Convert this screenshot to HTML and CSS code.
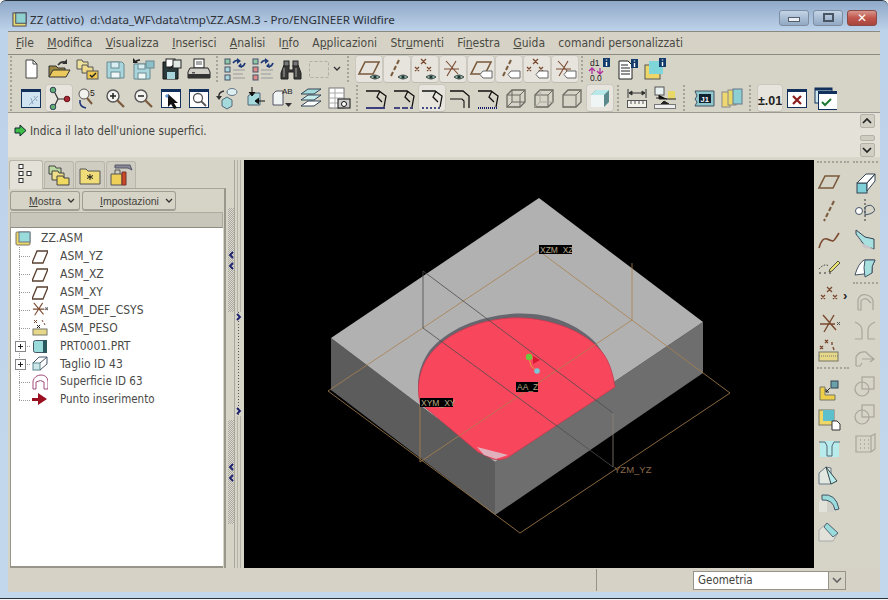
FILE: index.html
```html
<!DOCTYPE html>
<html lang="it">
<head>
<meta charset="utf-8">
<title>ZZ (attivo) - Pro/ENGINEER Wildfire</title>
<link rel="stylesheet" href="styles.css">
</head>
<body>
<svg class="defs" xmlns="http://www.w3.org/2000/svg"><defs>
<g id="p-eye"><path d="M13 20q5-4 10 0q-5 4-10 0z" fill="#8fb0a4" stroke="#3c4a48"/><circle cx="18" cy="20" r="1.600" fill="#1e3330"/></g>
<g id="p-tag"><path d="M14 14h9v7h-9l-3-3.500z" fill="#fff" stroke="#666"/></g>
<g id="p-plane"><path d="M8 5h14l-6 12H2z" fill="none" stroke="#7a5a3c" stroke-width="1.600"/></g>
<g id="p-axis"><path d="M14 3l-2 4M11 9l-2 4M8 15l-2 4" fill="none" stroke="#7a5a3c" stroke-width="2"/></g>
<g id="p-pts" fill="none" stroke="#7a4a30" stroke-width="1.300"><path d="M8 2l5 5M13 2l-5 5M2 10l4 4M6 10l-4 4M14 10l4 4M18 10l-4 4"/></g>
<g id="p-csys" fill="none" stroke="#7a4a30" stroke-width="1.100"><path d="M5 4l12 13M15 4L6 19M3 12h15"/></g>
<g id="p-i"><rect x="17" y="1" width="7" height="9" fill="#123a6a"/><path d="M20.500 2.500v1M20.500 5v4" stroke="#fff" stroke-width="1.400"/></g>
<g id="p-win"><rect x="2.500" y="3.500" width="19" height="18" fill="#fff" stroke="#12305c"/><rect x="2" y="3" width="20" height="3" fill="#12305c"/></g>
<g id="p-mag"><circle cx="10" cy="10" r="6" fill="#f2f2ee" stroke="#555" stroke-width="1.400"/><path d="M14 14l7 7" stroke="#7a5a3c" stroke-width="2.200"/></g>
<g id="p-floppy"><path d="M4 5h15l2 2v14H4z" fill="#a8d6dc" stroke="#6a8a90"/><rect x="8" y="5" width="8" height="6" fill="#d8eef0" stroke="#6a8a90"/><rect x="8" y="15" width="9" height="6" fill="#eef6f6" stroke="#6a8a90"/></g>

<g id="new"><path d="M7 3h7l4 4v14H7z" fill="#fff" stroke="#444"/><path d="M14 3v4h4" fill="none" stroke="#444"/></g>
<g id="open"><path d="M2 20V9h7l2 2h7v2" fill="#9a8640" stroke="#333"/><path d="M2 20l4-7h17l-4 7z" fill="#ecc95c" stroke="#333"/><path d="M11 8q4-5 8-2" fill="none" stroke="#333" stroke-width="1.600"/><path d="M20 2v5h-5z" fill="#333"/></g>
<g id="multi"><path d="M2 3h5l1 2h5v7H2z" fill="#efe29a" stroke="#555"/><path d="M7 8h5l1 2h5v6H7z" fill="#efd98a" stroke="#555"/><rect x="12" y="14" width="11" height="8" fill="#edc64e" stroke="#555"/><path d="M15 18l2 2 4-4" fill="none" stroke="#222" stroke-width="1.400"/></g>
<g id="save"><use href="#p-floppy"/></g>
<g id="saveas"><path d="M3 7h14l2 2v13H3z" fill="#a8d6dc" stroke="#6a8a90"/><rect x="7" y="7" width="7" height="5" fill="#d8eef0" stroke="#6a8a90"/><rect x="7" y="16" width="8" height="6" fill="#eef6f6" stroke="#6a8a90"/><path d="M4 6q1-3 5-3" fill="none" stroke="#222" stroke-width="1.400"/><path d="M2 1v5h5z" fill="#222"/><rect x="15" y="4" width="8" height="7" fill="#8cc0c8" stroke="#6a8a90"/></g>
<g id="backup"><path d="M4 5h15v17H4z" fill="#2b3b3c" stroke="#111"/><rect x="7" y="2" width="9" height="8" fill="#fff" stroke="#222"/><path d="M8 15h8v7H8z" fill="#a8d6dc"/><path d="M10 12l6-5" stroke="#222" stroke-width="1.500"/><rect x="14" y="3" width="8" height="8" fill="#dfe8e4" stroke="#222"/></g>
<g id="print"><rect x="7" y="2" width="10" height="9" fill="#fff" stroke="#222"/><path d="M9 5h6M9 7h6" stroke="#555"/><path d="M3 11h18l2 4v6H1v-6z" fill="#d0cfc8" stroke="#222"/><rect x="1" y="17" width="22" height="4" fill="#333"/><rect x="5" y="15" width="3" height="1.500" fill="#555"/></g>
<g id="regen"><rect x="2" y="2" width="5" height="5" fill="#8fc8a8" stroke="#456"/><rect x="2" y="10" width="5" height="5" fill="#a8d6dc" stroke="#456"/><rect x="2" y="18" width="5" height="5" fill="#a8d6dc" stroke="#456"/><path d="M10 6q3-4 6-2M22 6q-2 5-6 3" fill="none" stroke="#1e3a78" stroke-width="1.800"/><path d="M14 1v6l4-3zM18 6l-3 3 4 2z" fill="#1e3a78"/><path d="M10 13h12M10 17h10M10 21h12" stroke="#999"/></g>
<g id="regen2"><rect x="2" y="2" width="5" height="5" fill="#8fc8a8" stroke="#456"/><rect x="2" y="10" width="5" height="5" fill="#e08888" stroke="#456"/><rect x="2" y="18" width="5" height="5" fill="#e08888" stroke="#456"/><path d="M10 6q3-4 6-2M22 6q-2 5-6 3" fill="none" stroke="#1e3a78" stroke-width="1.800"/><path d="M14 1v6l4-3zM18 6l-3 3 4 2z" fill="#1e3a78"/><path d="M10 13h12M10 17h10M10 21h12" stroke="#999"/></g>
<g id="binoc"><path d="M5 8h5v5h4V8h5l3 8v6h-7v-7h-6v7H2v-6z" fill="#3a3a38" stroke="#222"/><rect x="5" y="4" width="5" height="5" fill="#777" stroke="#222"/><rect x="14" y="4" width="5" height="5" fill="#777" stroke="#222"/><path d="M5 11v9M17 11v9" stroke="#aaa"/></g>
<g id="dash"><rect x="2.500" y="4.500" width="19" height="16" fill="none" stroke="#b0aea4" stroke-dasharray="3 2"/></g>
<g id="pl-eye"><use href="#p-plane"/><use href="#p-eye"/></g>
<g id="ax-eye"><use href="#p-axis"/><use href="#p-eye"/></g>
<g id="pt-eye"><use href="#p-pts"/><use href="#p-eye"/></g>
<g id="cs-eye"><use href="#p-csys"/><use href="#p-eye"/></g>
<g id="pl-tag"><use href="#p-plane"/><use href="#p-tag"/></g>
<g id="ax-tag"><use href="#p-axis"/><use href="#p-tag"/></g>
<g id="pt-tag"><use href="#p-pts"/><use href="#p-tag"/></g>
<g id="cs-tag"><use href="#p-csys"/><use href="#p-tag"/></g>
<g id="dim-i"><text x="4" y="9" class="svgtxt">d1</text><path d="M6 11v6M3 14l3-3 3 3" fill="none" stroke="#b030a0" stroke-width="1.300"/><path d="M14 11v6M11 14l3 3 3-3" fill="none" stroke="#b030a0" stroke-width="1.300"/><text x="4" y="23.500" class="svgtxt">0.0</text><use href="#p-i"/></g>
<g id="list-i"><path d="M5 4h9l4 4v14H5z" fill="#fff" stroke="#222"/><path d="M7 8h7M7 11h9M7 14h9M7 17h9" stroke="#222"/><use href="#p-i" transform="translate(0 1)"/></g>
<g id="box-i"><rect x="3" y="8" width="15" height="14" fill="#efd668" stroke="#555"/><rect x="7" y="4" width="14" height="13" fill="#7fd6d8"/><use href="#p-i"/></g>

<g id="paint"><use href="#p-win"/><rect x="3" y="6" width="18" height="15" fill="#cfe4f0"/><path d="M10 19l9-9M12 12l2 6M15 10l3 5" stroke="#8fa8c0"/></g>
<g id="tree"><path d="M7 5l4 8-4 8M11 13h9" fill="none" stroke="#333" stroke-width="1.200"/><circle cx="6" cy="4" r="2.800" fill="#5fae78" stroke="#345"/><circle cx="6" cy="21" r="2.800" fill="#5fae78" stroke="#345"/><circle cx="20" cy="13" r="2.800" fill="#a8283a" stroke="#611"/></g>
<g id="zoomfit"><circle cx="9" cy="8" r="5" fill="#f2f2ee" stroke="#555"/><path d="M12 12l5 6" stroke="#7a5a3c" stroke-width="2"/><path d="M5 14q-1 7 6 8" fill="none" stroke="#1e3a78" stroke-width="1.600"/><text x="15" y="10" class="svgtxt">5</text></g>
<g id="zoomin"><use href="#p-mag"/><path d="M7 10h6M10 7v6" stroke="#222" stroke-width="1.500"/></g>
<g id="zoomout"><use href="#p-mag"/><path d="M7 10h6" stroke="#222" stroke-width="1.500"/></g>
<g id="wincur"><use href="#p-win"/><path d="M9 8v13l3-3 3 5 3-1-3-5h4z" fill="#111"/><path d="M6 10h4M8 8v4" stroke="#3a78c0"/></g>
<g id="winmag"><use href="#p-win"/><circle cx="11" cy="12" r="4.500" fill="none" stroke="#555" stroke-width="1.300"/><path d="M14 15l5 5" stroke="#555" stroke-width="1.800"/></g>
<g id="spin"><path d="M7 14l5-3 5 3v6l-5 3-5-3z" fill="#a4dadc" stroke="#567"/><ellipse cx="17" cy="6" rx="5" ry="3.500" fill="#dceef0" stroke="#678"/><path d="M9 5Q3 6 4 12" fill="none" stroke="#333" stroke-width="1.500"/><path d="M1 10h6l-3 4z" fill="#333"/></g>
<g id="orient"><path d="M5 10l4-3h8v12H5z" fill="#a4dadc" stroke="#567"/><path d="M9 1v8M6 6l3 4 3-4" fill="#111" stroke="#111"/><path d="M22 15h-9M16 12l-4 3 4 3" fill="#111" stroke="#111"/></g>
<g id="ab"><path d="M2 8l3-3h7v14H2z" fill="#f0f4f2" stroke="#556"/><text x="11" y="8" class="svgtxt svgwide">AB</text><path d="M14 17h7l-3.500 4z" fill="#333"/></g>
<g id="layers"><path d="M9 3h13l-7 5H2z" fill="#a4dadc" stroke="#345"/><path d="M9 9h13l-7 5H2z" fill="#c8ecec" stroke="#345"/><path d="M9 15h13l-7 5H2z" fill="#fff" stroke="#345"/></g>
<g id="camtab"><rect x="2" y="2" width="15" height="20" fill="#fff" stroke="#777"/><path d="M2 7h15M2 12h15M2 17h15M8 2v20" stroke="#aaa"/><rect x="11" y="13" width="12" height="9" fill="#ccc" stroke="#111"/><circle cx="17" cy="18" r="2.500" fill="#fff" stroke="#111"/></g>
<g id="e-b" fill="none" stroke="#111" stroke-width="1.300"><path d="M2 5h13l7 5-2 11"/><path d="M16 5l-3 6 5 5"/></g>
<g id="e1"><use href="#e-b"/><path d="M2 22h19" stroke="#151a6a" stroke-width="1.600"/></g>
<g id="e2"><use href="#e-b"/><path d="M2 22h19" stroke="#151a6a" stroke-width="1.600" stroke-dasharray="6 2"/></g>
<g id="e3"><use href="#e-b"/><path d="M2 22h19" stroke="#151a6a" stroke-width="1.600" stroke-dasharray="2 2"/></g>
<g id="e4"><path d="M2 5h13l6 5v12" fill="none" stroke="#111" stroke-width="1.300"/><path d="M2 13h12l2 2v7" fill="none" stroke="#111" stroke-width="1.100"/></g>
<g id="e5"><use href="#e-b"/><path d="M2 22h19" stroke="#151a6a" stroke-width="2" stroke-dasharray="1 1"/></g>
<g id="c-out" fill="none" stroke="#6a6a62" stroke-width="1.300"><path d="M3 9l5-5h13v12l-5 5H3z"/></g>
<g id="c1"><use href="#c-out"/><path d="M3 9h13v12M16 9l5-5M3 21l5-5h13M8 4v12" fill="none" stroke="#6a6a62"/></g>
<g id="c2"><use href="#c-out"/><path d="M3 9h13v12M16 9l5-5" fill="none" stroke="#6a6a62"/><path d="M3 21l5-5h13M8 4v12" fill="none" stroke="#aaa89e"/></g>
<g id="c3"><use href="#c-out"/><path d="M3 9h13v12M16 9l5-5" fill="none" stroke="#6a6a62"/></g>
<g id="c4"><path d="M3 9l5-5h13v12l-5 5z" fill="#5c8a8c"/><rect x="3" y="9" width="13" height="12" fill="#eff4f4"/><path d="M3 9l5-5h13l-5 5z" fill="#b8e8ea"/></g>
<g id="ruler"><path d="M3 3v9M21 3v9M4 7h16M4 7l3-2v4zM20 7l-3-2v4z" fill="#333" stroke="#333"/><rect x="2.500" y="14.500" width="19" height="7" fill="#f2f2ea" stroke="#555"/><path d="M6 15v3M10 15v3M14 15v3M18 15v3" stroke="#555"/></g>
<g id="scale"><rect x="2" y="1" width="9" height="8" fill="#e8f0f0" stroke="#555"/><path d="M6 9v4h8M3 12h6" stroke="#222"/><rect x="15" y="5" width="7" height="8" fill="#e8d868"/><path d="M13 13h10M11 15l-3 3h8z" fill="#222" stroke="#222"/><rect x="1.500" y="18.500" width="21" height="4" fill="#eee" stroke="#777"/></g>
<g id="j1"><path d="M3 5h19v15H3l2-4-2-3 2-3z" fill="#8ec8cc" stroke="#456"/><rect x="7" y="8" width="12" height="9" fill="#123"/><text x="8.500" y="15.500" class="svgtxt svgwhite">J1</text></g>
<g id="books"><rect x="2" y="6" width="8" height="15" fill="#f0d870" stroke="#888"/><rect x="8" y="4" width="8" height="15" fill="#e8d868" stroke="#888"/><rect x="13" y="3" width="9" height="15" fill="#8cd0d4" stroke="#678"/></g>
<g id="tol"><text x="0" y="19" class="svgtol">±.01</text></g>
<g id="winx"><use href="#p-win"/><path d="M8 10l8 8M16 10l-8 8" stroke="#8a1c1c" stroke-width="2.200"/></g>
<g id="wincheck"><rect x="2" y="2" width="17" height="15" fill="#cfe8ee" stroke="#12305c"/><rect x="2" y="2" width="17" height="2.500" fill="#12305c"/><use href="#p-win" transform="translate(3 2)"/><path d="M9 16l3 3 6-6" fill="none" stroke="#1e7a30" stroke-width="2"/></g>

<g id="plane"><use href="#p-plane"/></g>
<g id="axis"><path d="M17 2l-2 4M14 8l-2 4M11 14l-2 4M8 20l-1 2" stroke="#7a5a3c" stroke-width="2"/></g>
<g id="curve"><path d="M2 21q3-11 8-9t6 2 6-8" fill="none" stroke="#7a4a30" stroke-width="1.600"/></g>
<g id="skcurve"><path d="M2 14q5-6 10-3" fill="none" stroke="#333" stroke-dasharray="1.500 1.500"/><path d="M2 18h2M7 18h2M12 18h2" stroke="#333"/><path d="M13 14l8-8 2 2-8 8-3 1z" fill="#e8e070" stroke="#554"/></g>
<g id="pts"><use href="#p-pts" transform="translate(2 2)"/></g>
<g id="csys"><path d="M6 4l13 15M17 4L7 21M3 13h15" fill="none" stroke="#7a4a30" stroke-width="1.400"/><path d="M20 11l3 3M23 11l-3 3" stroke="#555"/></g>
<g id="weight"><path d="M8 1l3 3M11 1L8 4M3 7l3 3M6 7l-3 3M15 3v3M16 8l1 3" stroke="#7a4a30" stroke-width="1.400"/><rect x="2" y="13" width="19" height="9" fill="#e6d888" stroke="#776"/><path d="M2 17h19" stroke="#776" stroke-dasharray="1 1"/></g>
<g id="import"><path d="M3 8h5v8h10v5H3z" fill="#efcf48" stroke="#776"/><path d="M9 13l4-4M9 10v3h3" fill="none" stroke="#222"/><rect x="14" y="2" width="7" height="7" fill="#6aa0a8" stroke="#345"/></g>
<g id="tagbox"><rect x="2" y="3" width="15" height="15" fill="#efd668" stroke="#776"/><rect x="6" y="3" width="11" height="11" fill="#5cc0cc"/><path d="M15 14h5l3 3v6h-8z" fill="#fff" stroke="#333"/></g>
<g id="trim"><rect x="3" y="6" width="19" height="16" fill="#b8ecec"/><path d="M2 7h6l2 4v10M23 7h-6l-2 4v10M10 21h5" fill="none" stroke="#567"/></g>
<g id="chamfer"><path d="M2 10l7-6 5 1v16H2z" fill="#e2e8e0" stroke="#678"/><path d="M9 4l11 14-6 3-5-17z" fill="#b8ecec" stroke="#344"/></g>
<g id="round"><path d="M2 12q0-6 8-7v16H2z" fill="#e2e2da"/><path d="M10 5q10 0 11 13l-4 3H10z" fill="#d0d0c8"/><path d="M5 4q14-2 17 14l-4 1Q16 8 5 9z" fill="#9adcdc" stroke="#456"/></g>
<g id="bevel"><path d="M2 11l8-7 11 10-5 8H2z" fill="#e2e2da" stroke="#aaa"/><path d="M10 4l11 10-5 4L7 8z" fill="#9adcdc" stroke="#567"/></g>
<g id="extrude"><rect x="4" y="12" width="10" height="10" fill="#7fd0d8" stroke="#345"/><path d="M4 12l9-9h9l-8 9zM22 3v7l-8 10v-8z" fill="#fff" stroke="#345"/></g>
<g id="revolve"><path d="M12 0v24" stroke="#333" stroke-dasharray="2 2"/><circle cx="6" cy="12" r="3.500" fill="#fff" stroke="#456"/><path d="M12 8q6-4 9 1t-9 7z" fill="none" stroke="#456"/></g>
<g id="sweep"><path d="M3 3l9 7 9 2v10l-9-3-9-12z" fill="#a8e0e0" stroke="#345"/><path d="M3 7l6 9 12 6-10-1z" fill="#c8c4c8"/></g>
<g id="blend"><path d="M2 20q3-11 9-15h11q-4 6-3 13z" fill="#fff" stroke="#456"/><path d="M12 5l10 0q-4 6-3 13l-7 4q-2-10 0-17z" fill="#a8e0e0" stroke="#456"/></g>
<g id="dis" fill="none" stroke="#a8a69c" stroke-width="1.200"><path d="M5 20V10q2-7 9-5t6 9v6M5 20h3V11q3-4 7-1l3 3"/></g>
<g id="dmirror" fill="none" stroke="#a8a69c" stroke-width="1.200"><path d="M2 4q7 3 7 8v9H2M22 4q-7 3-7 8v9h7"/></g>
<g id="dextend" fill="none" stroke="#a8a69c" stroke-width="1.200"><path d="M3 20V11q3-6 10-5l4 4M3 20h4l2-3M9 13h11M17 10l4 3-4 3"/></g>
<g id="dtrim" fill="none" stroke="#a8a69c" stroke-width="1.200"><circle cx="9" cy="15" r="7"/><rect x="9" y="3" width="12" height="12"/></g>
<g id="dpat" fill="none" stroke="#a8a69c" stroke-width="1.200"><path d="M3 6h15v16H3zM18 6l4-2v15l-4 3"/><path d="M7 10h1M11 10h1M15 10h1M7 14h1M11 14h1M15 14h1M7 18h1M11 18h1M15 18h1" stroke-width="1.600"/></g>

<g id="tab-tree"><rect x="5" y="1.500" width="4" height="4" fill="#fff" stroke="#333"/><rect x="5" y="8.500" width="4" height="4" fill="#fff" stroke="#333"/><rect x="13" y="8.500" width="4" height="4" fill="#fff" stroke="#333"/><rect x="5" y="15.500" width="4" height="4" fill="#fff" stroke="#333"/></g>
<g id="tab-folders"><path d="M2 3h6l1 2h5v6H2z" fill="#b8d8a0" stroke="#444"/><path d="M5 8h6l1 2h5v7H5z" fill="#efdf88" stroke="#444"/><path d="M10 13h6l1 2h5v7H10z" fill="#efd960" stroke="#444"/></g>
<g id="tab-star"><path d="M2 6h6l2 2h12v13H2z" fill="#f0dc78" stroke="#555"/><path d="M12 11v6M9 12.500l6 3M15 12.500l-6 3" stroke="#222"/></g>
<g id="tab-tools"><path d="M2 11h11v11H2z" fill="#efcf58" stroke="#555"/><path d="M13 9h4v13h-4z" fill="#c84828" stroke="#733"/><path d="M6 11V7h5v4" fill="none" stroke="#555"/><path d="M6 2h15l2 5-4-2H6z" fill="#889" stroke="#556"/></g>

<g id="t-asm"><rect x="1" y="3" width="14" height="13" rx="1" fill="#efd668" stroke="#776"/><rect x="4" y="3" width="11" height="10" fill="#9adcdc" stroke="#678"/></g>
<g id="t-plane"><path d="M5 3h11l-5 12H0z" fill="none" stroke="#5a4030" stroke-width="1.300"/></g>
<g id="t-csys" fill="none" stroke="#7a4a30" stroke-width="1.200"><path d="M2 1l11 13M12 1L3 15M1 8h13"/><path d="M15 6l3 3M18 6l-3 3" stroke="#666"/></g>
<g id="t-peso"><path d="M2 1l3 3M5 1L2 4M10 1l1 2M12 4l1 2" stroke="#7a4a30"/><path d="M5 6l3 3M8 6L5 9" stroke="#222"/><rect x="1" y="10" width="14" height="6" fill="#e6d888" stroke="#776"/></g>
<g id="t-part"><rect x="1.500" y="3.500" width="13" height="12" rx="2" fill="#9adcdc" stroke="#456"/><rect x="11" y="3" width="4" height="13" fill="#2a5a60"/></g>
<g id="t-cut"><rect x="1" y="8" width="7" height="7" fill="#cde8e8" stroke="#5a8a90"/><path d="M1 8l6-6h8v7l-7 6M8 8l7-6" fill="none" stroke="#456"/></g>
<g id="t-surf" fill="none" stroke="#a04a7a"><path d="M1 16V8q2-6 8-6t7 6v8h-4V9q-3-3-8 0v7z"/></g>
<g id="t-ins"><path d="M0 7h6V2l9 6-9 6V10H0z" fill="#9a1020"/></g>
<g id="chev-l"><path d="M5 1L2 4l3 3" fill="none" stroke="#1a2070" stroke-width="1.800"/></g>
<g id="chev-r"><path d="M1 1l3 3-3 3" fill="none" stroke="#1a2070" stroke-width="1.800"/></g>
</defs></svg>

<div class="window">
  <header class="titlebar">
    <svg class="title-icon" viewBox="0 0 16 16"><rect x="1" y="1" width="14" height="14" fill="#e8d870" stroke="#445"/><rect x="4" y="1" width="11" height="11" fill="#8fd0d0" stroke="#445"/></svg>
    <span class="title-text">ZZ (attivo)  d:\data_WF\data\tmp\ZZ.ASM.3 - Pro/ENGINEER Wildfire</span>
    <div class="win-controls">
      <span class="wc"><i class="wc-min"></i></span>
      <span class="wc"><i class="wc-max"></i></span>
      <span class="wc wc-close">✕</span>
    </div>
  </header>

  <nav class="menubar">
    <span><u>F</u>ile</span><span><u>M</u>odifica</span><span><u>V</u>isualizza</span><span><u>I</u>nserisci</span><span><u>A</u>nalisi</span><span>I<u>n</u>fo</span><span>A<u>p</u>plicazioni</span><span>Str<u>u</u>menti</span><span>Fi<u>n</u>estra</span><span><u>G</u>uida</span><span>comandi personalizzati</span>
  </nav>

  <div class="toolbars">
    <div class="tbrow">
      <i class="sep sep-grip"></i>
      <span class="tb"><svg viewBox="0 0 24 24"><use href="#new"/></svg></span>
      <span class="tb"><svg viewBox="0 0 24 24"><use href="#open"/></svg></span>
      <span class="tb"><svg viewBox="0 0 24 24"><use href="#multi"/></svg></span>
      <span class="tb"><svg viewBox="0 0 24 24"><use href="#save"/></svg></span>
      <span class="tb"><svg viewBox="0 0 24 24"><use href="#saveas"/></svg></span>
      <span class="tb"><svg viewBox="0 0 24 24"><use href="#backup"/></svg></span>
      <span class="tb"><svg viewBox="0 0 24 24"><use href="#print"/></svg></span>
      <i class="sep"></i>
      <span class="tb"><svg viewBox="0 0 24 24"><use href="#regen"/></svg></span>
      <span class="tb"><svg viewBox="0 0 24 24"><use href="#regen2"/></svg></span>
      <span class="tb"><svg viewBox="0 0 24 24"><use href="#binoc"/></svg></span>
      <span class="tb"><svg viewBox="0 0 24 24"><use href="#dash"/></svg></span>
      <span class="tb-arrow"><svg viewBox="0 0 8 6"><path d="M1 1l3 3 3-3" fill="none" stroke="#333" stroke-width="1.300"/></svg></span>
      <i class="sep sep-after"></i>
      <span class="tb on"><svg viewBox="0 0 24 24"><use href="#pl-eye"/></svg></span>
      <span class="tb on"><svg viewBox="0 0 24 24"><use href="#ax-eye"/></svg></span>
      <span class="tb on"><svg viewBox="0 0 24 24"><use href="#pt-eye"/></svg></span>
      <span class="tb on"><svg viewBox="0 0 24 24"><use href="#cs-eye"/></svg></span>
      <span class="tb on"><svg viewBox="0 0 24 24"><use href="#pl-tag"/></svg></span>
      <span class="tb on"><svg viewBox="0 0 24 24"><use href="#ax-tag"/></svg></span>
      <span class="tb on"><svg viewBox="0 0 24 24"><use href="#pt-tag"/></svg></span>
      <span class="tb on"><svg viewBox="0 0 24 24"><use href="#cs-tag"/></svg></span>
      <i class="sep sep-narrow"></i>
      <span class="tb"><svg viewBox="0 0 24 24"><use href="#dim-i"/></svg></span>
      <span class="tb"><svg viewBox="0 0 24 24"><use href="#list-i"/></svg></span>
      <span class="tb"><svg viewBox="0 0 24 24"><use href="#box-i"/></svg></span>
    </div>
    <div class="tbrow">
      <i class="sep sep-grip"></i>
      <span class="tb"><svg viewBox="0 0 24 24"><use href="#paint"/></svg></span>
      <span class="tb on"><svg viewBox="0 0 24 24"><use href="#tree"/></svg></span>
      <span class="tb"><svg viewBox="0 0 24 24"><use href="#zoomfit"/></svg></span>
      <span class="tb"><svg viewBox="0 0 24 24"><use href="#zoomin"/></svg></span>
      <span class="tb"><svg viewBox="0 0 24 24"><use href="#zoomout"/></svg></span>
      <span class="tb"><svg viewBox="0 0 24 24"><use href="#wincur"/></svg></span>
      <span class="tb"><svg viewBox="0 0 24 24"><use href="#winmag"/></svg></span>
      <span class="tb"><svg viewBox="0 0 24 24"><use href="#spin"/></svg></span>
      <span class="tb"><svg viewBox="0 0 24 24"><use href="#orient"/></svg></span>
      <span class="tb"><svg viewBox="0 0 24 24"><use href="#ab"/></svg></span>
      <span class="tb"><svg viewBox="0 0 24 24"><use href="#layers"/></svg></span>
      <span class="tb"><svg viewBox="0 0 24 24"><use href="#camtab"/></svg></span>
      <i class="sep sep-after2"></i>
      <span class="tb"><svg viewBox="0 0 24 24"><use href="#e1"/></svg></span>
      <span class="tb"><svg viewBox="0 0 24 24"><use href="#e2"/></svg></span>
      <span class="tb on"><svg viewBox="0 0 24 24"><use href="#e3"/></svg></span>
      <span class="tb"><svg viewBox="0 0 24 24"><use href="#e4"/></svg></span>
      <span class="tb"><svg viewBox="0 0 24 24"><use href="#e5"/></svg></span>
      <span class="tb"><svg viewBox="0 0 24 24"><use href="#c1"/></svg></span>
      <span class="tb"><svg viewBox="0 0 24 24"><use href="#c2"/></svg></span>
      <span class="tb"><svg viewBox="0 0 24 24"><use href="#c3"/></svg></span>
      <span class="tb on"><svg viewBox="0 0 24 24"><use href="#c4"/></svg></span>
      <i class="sep sep-after2"></i>
      <span class="tb"><svg viewBox="0 0 24 24"><use href="#ruler"/></svg></span>
      <span class="tb"><svg viewBox="0 0 24 24"><use href="#scale"/></svg></span>
      <i class="sep sep-wide"></i>
      <span class="tb"><svg viewBox="0 0 24 24"><use href="#j1"/></svg></span>
      <span class="tb"><svg viewBox="0 0 24 24"><use href="#books"/></svg></span>
      <i class="sep sep-after"></i>
      <span class="tb on tb-tol"><svg viewBox="0 0 24 24"><use href="#tol"/></svg></span>
      <span class="tb"><svg viewBox="0 0 24 24"><use href="#winx"/></svg></span>
      <span class="tb"><svg viewBox="0 0 24 24"><use href="#wincheck"/></svg></span>
    </div>
  </div>

  <section class="message">
    <svg class="msg-arrow" viewBox="0 0 13 13"><path d="M6 1l6 5.500-6 5.500V9H1V4h5z" fill="#3ec048" stroke="#123"/></svg>
    <span>Indica il lato dell'unione superfici.</span>
    <div class="msg-scroll">
      <span class="sb"><svg viewBox="0 0 10 6"><path d="M1 5l4-4 4 4" fill="none" stroke="#222" stroke-width="1.700"/></svg></span>
      <span class="sb-thumb"></span>
      <span class="sb"><svg viewBox="0 0 10 6"><path d="M1 1l4 4 4-4" fill="none" stroke="#222" stroke-width="1.700"/></svg></span>
    </div>
  </section>

  <main class="workspace">
    <aside class="panel">
      <div class="tabs">
        <span class="tab active"><svg viewBox="0 0 24 24"><use href="#tab-tree"/></svg></span>
        <span class="tab"><svg viewBox="0 0 24 24"><use href="#tab-folders"/></svg></span>
        <span class="tab"><svg viewBox="0 0 24 24"><use href="#tab-star"/></svg></span>
        <span class="tab"><svg viewBox="0 0 24 24"><use href="#tab-tools"/></svg></span>
      </div>
      <div class="panel-box">
        <div class="panel-actions">
          <button class="pbtn pbtn-show"><span><u>M</u>ostra</span><svg viewBox="0 0 8 6"><path d="M1 1l3 3 3-3" fill="none" stroke="#333" stroke-width="1.300"/></svg></button>
          <button class="pbtn pbtn-set"><span><u>I</u>mpostazioni</span><svg viewBox="0 0 8 6"><path d="M1 1l3 3 3-3" fill="none" stroke="#333" stroke-width="1.300"/></svg></button>
        </div>
        <div class="tree-head"></div>
        <ul class="tree">
          <li class="root"><svg viewBox="0 0 16 18"><use href="#t-asm"/></svg><span>ZZ.ASM</span></li>
          <li><i class="guide"></i><svg viewBox="0 0 16 18"><use href="#t-plane" transform="translate(0 1)"/></svg><span>ASM_YZ</span></li>
          <li><i class="guide"></i><svg viewBox="0 0 16 18"><use href="#t-plane" transform="translate(0 1)"/></svg><span>ASM_XZ</span></li>
          <li><i class="guide"></i><svg viewBox="0 0 16 18"><use href="#t-plane" transform="translate(0 1)"/></svg><span>ASM_XY</span></li>
          <li><i class="guide"></i><svg viewBox="0 0 18 18"><use href="#t-csys"/></svg><span>ASM_DEF_CSYS</span></li>
          <li><i class="guide"></i><svg viewBox="0 0 16 18"><use href="#t-peso"/></svg><span>ASM_PESO</span></li>
          <li><i class="guide plus"></i><svg viewBox="0 0 16 18"><use href="#t-part"/></svg><span>PRT0001.PRT</span></li>
          <li><i class="guide plus"></i><svg viewBox="0 0 16 18"><use href="#t-cut"/></svg><span>Taglio ID 43</span></li>
          <li class="narrow"><i class="guide"></i><svg viewBox="0 0 16 18"><use href="#t-surf"/></svg><span>Superficie ID 63</span></li>
          <li class="narrow last"><i class="guide"></i><svg viewBox="0 0 16 18"><use href="#t-ins"/></svg><span>Punto inserimento</span></li>
        </ul>
      </div>
    </aside>

    <div class="splitter">
      <div class="grip-col">
        <div class="grip"><svg class="chev" viewBox="0 0 6 8"><use href="#chev-l"/></svg><svg class="chev" viewBox="0 0 6 8"><use href="#chev-l"/></svg></div>
      </div>
      <div class="grip-mid"><svg class="chev" viewBox="0 0 6 8"><use href="#chev-r"/></svg><svg class="chev" viewBox="0 0 6 8"><use href="#chev-r"/></svg></div>
      <div class="grip-col grip-low">
        <div class="grip"><svg class="chev" viewBox="0 0 6 8"><use href="#chev-l"/></svg><svg class="chev" viewBox="0 0 6 8"><use href="#chev-l"/></svg></div>
      </div>
    </div>

    <svg class="viewport" viewBox="244 160 570 408" xmlns="http://www.w3.org/2000/svg" role="img" aria-label="Modello 3D">
      <rect x="244" y="160" width="570" height="408" fill="#000"/>
      <path d="M331 338L495 462V515L331 390z" fill="#5c5c5c"/>
      <path d="M495 462L703 322V373L495 515z" fill="#6e6e6e"/>
      <path d="M539 198L703 322L495 462L331 338z" fill="#b1b1b1"/>
      <path d="M615 385C612 370 606 356 596 343C575 322 545 311 510 314C478 317 448 329 430 350C420 364 416 380 419 395z" fill="#66666e"/>
      <path d="M615 387L507 458Q500 461 493 459L478 452L420 403C416 385 420 366 432 352C448 333 478 320 510 318C545 316 585 330 602 352C610 362 613 375 615 387z" fill="#f8475c" stroke="#c83a50" stroke-width=".8"/>
      <path d="M477 447L508 455 496 459 484 455z" fill="#e0b0bc"/>
      <g fill="none" stroke="#a8824e" stroke-width=".8">
        <path d="M328 391L540 250"/>
        <path d="M420 462L632 320"/>
        <path d="M632 263V320"/>
        <path d="M420 403V462"/>
        <path d="M328 391L520 533 730 393 543 254"/>
      </g>
      <g fill="none" stroke="#4c4c4c" stroke-width=".8">
        <path d="M423 271V328"/>
        <path d="M423 271L613 413"/>
        <path d="M423 328L613 467"/>
      </g>
      <path d="M613 413V467" fill="none" stroke="#8a8478" stroke-width=".8"/>
      <path d="M529 357L531 366 537 371M529 357L537 360" fill="none" stroke="#e0a040"/>
      <path d="M533 356L540 360 533 364z" fill="#d81830"/>
      <circle cx="529" cy="357" r="3.200" fill="#6cc83c"/>
      <circle cx="537" cy="371" r="2.800" fill="#78c8d8"/>
      <rect x="539" y="245" width="33" height="9" fill="#000"/>
      <text x="540" y="252.500" class="gl">XZM_XZ</text>
      <rect x="420" y="398" width="33" height="9" fill="#000"/>
      <text x="421" y="405.500" class="gl">XYM_XY</text>
      <rect x="516" y="382" width="22" height="10" fill="#000"/>
      <text x="517" y="390" class="gl">AA_Z</text>
      <text x="614" y="473" class="gl gl-dim">YZM_YZ</text>
    </svg>

    <aside class="rightbar">
      <div class="rcol rcol-a">
        <i class="rsep"></i>
        <span class="rb"><svg viewBox="0 0 24 24"><use href="#plane"/></svg></span>
        <span class="rb"><svg viewBox="0 0 24 24"><use href="#axis"/></svg></span>
        <span class="rb"><svg viewBox="0 0 24 24"><use href="#curve"/></svg></span>
        <span class="rb"><svg viewBox="0 0 24 24"><use href="#skcurve"/></svg></span>
        <span class="rb"><svg viewBox="0 0 24 24"><use href="#pts"/></svg><em>›</em></span>
        <span class="rb"><svg viewBox="0 0 24 24"><use href="#csys"/></svg></span>
        <span class="rb"><svg viewBox="0 0 24 24"><use href="#weight"/></svg></span>
        <i class="rsep rsep-mid"></i>
        <span class="rb"><svg viewBox="0 0 24 24"><use href="#import"/></svg></span>
        <span class="rb"><svg viewBox="0 0 24 24"><use href="#tagbox"/></svg></span>
        <span class="rb"><svg viewBox="0 0 24 24"><use href="#trim"/></svg></span>
        <span class="rb"><svg viewBox="0 0 24 24"><use href="#chamfer"/></svg></span>
        <span class="rb"><svg viewBox="0 0 24 24"><use href="#round"/></svg></span>
        <span class="rb"><svg viewBox="0 0 24 24"><use href="#bevel"/></svg></span>
      </div>
      <div class="rcol rcol-b">
        <i class="rsep"></i>
        <span class="rb"><svg viewBox="0 0 24 24"><use href="#extrude"/></svg></span>
        <span class="rb"><svg viewBox="0 0 24 24"><use href="#revolve"/></svg></span>
        <span class="rb"><svg viewBox="0 0 24 24"><use href="#sweep"/></svg></span>
        <span class="rb"><svg viewBox="0 0 24 24"><use href="#blend"/></svg></span>
        <i class="rsep rsep-b"></i>
        <span class="rb"><svg viewBox="0 0 24 24"><use href="#dis"/></svg></span>
        <span class="rb"><svg viewBox="0 0 24 24"><use href="#dmirror"/></svg></span>
        <span class="rb"><svg viewBox="0 0 24 24"><use href="#dextend"/></svg></span>
        <span class="rb"><svg viewBox="0 0 24 24"><use href="#dtrim"/></svg></span>
        <span class="rb"><svg viewBox="0 0 24 24"><use href="#dtrim"/></svg></span>
        <span class="rb"><svg viewBox="0 0 24 24"><use href="#dpat"/></svg></span>
      </div>
    </aside>
  </main>

  <footer class="statusbar">
    <i class="status-div"></i>
    <div class="combo">
      <span class="combo-val">Geometria</span>
      <span class="combo-btn"><svg viewBox="0 0 10 6"><path d="M1 1l4 4 4-4" fill="none" stroke="#666" stroke-width="1.700"/></svg></span>
    </div>
  </footer>
</div>
</body>
</html>
```
FILE: styles.css
```css
* { box-sizing: border-box; }
html, body { margin: 0; height: 600px; overflow: hidden; background: #f4f4f2; }
body { font: 12px/1 "DejaVu Sans Condensed", "Noto Sans", sans-serif; color: #3a3a38; }
.defs { display: none; }
.svgtxt { font: 8.500px "Liberation Sans", sans-serif; fill: #222; }
.svgwide { font-size: 8px; }
.svgwhite { fill: #fff; font-weight: 700; font-size: 7.500px; }
.svgtol { font: 700 12.500px "Liberation Sans", sans-serif; fill: #222; }

.window {
  height: 599px;
  padding: 0 8px 6px;
  display: flex;
  flex-direction: column;
  border-top: 1px solid #26333f;
  border-bottom: 1px solid #26333f;
  border-radius: 6px 6px 0 0;
  background: linear-gradient(#8fa9c8 0, #a5bcd8 14px, #bdd3ea 30px, #c3d7ec 100%);
}

/* title bar */
.titlebar { height: 30px; flex: none; display: flex; align-items: center; padding: 7px 0 0 4px; }
.title-icon { width: 15px; height: 15px; flex: none; }
.title-text { margin-left: 3px; white-space: pre; font: 11.600px "Noto Sans", sans-serif; color: #2e3238; }
.win-controls { margin-left: auto; margin-right: 3px; margin-top: -4px; display: flex; gap: 4px; }
.wc {
  width: 30px; height: 16px; display: flex; align-items: center; justify-content: center;
  border: 1px solid #7d8ea3; border-radius: 3px;
  background: linear-gradient(#c4d4e6, #a8bdd4 50%, #92a9c4);
}
.wc-min { width: 12px; height: 5px; margin-top: 3px; background: #e8eef4; border: 1px solid #555f6c; }
.wc-max { width: 11px; height: 9px; background: transparent; border: 2px solid #4a5564; }
.wc-close {
  border-color: #8a4a48; color: #fff; font: 700 12px "DejaVu Sans", sans-serif;
  background: linear-gradient(#d8968c, #c0564c 50%, #a8463c);
}

/* menu */
.menubar {
  height: 24px; flex: none; display: flex; align-items: center; gap: 13.300px; padding-left: 8px;
  background: #d6d3c6; border-top: 1px solid #8a8a82; border-bottom: 1px solid #8a8a82;
  font-size: 12px; color: #4a4a44; white-space: nowrap;
}

/* toolbars */
.toolbars { flex: none; background: #d6d3c7; border-bottom: 1px solid #9a9a92; }
.tbrow { display: flex; height: 28px; align-items: center; padding-left: 1px; }
.tbrow + .tbrow { height: 29px; }
.tb { width: 28px; height: 28px; flex: none; display: flex; align-items: center; justify-content: center; }
.tb svg { width: 24px; height: 24px; display: block; }
.tb.on { background: #e6e4dc; border: 1px solid #cbc9bf; border-bottom-color: #bebcb2; border-radius: 4px; }
.tb-tol { width: 26px; }
.tb-arrow { width: 11px; flex: none; display: flex; }
.tb-arrow svg { width: 8px; height: 6px; }
.sep { flex: none; width: 8px; height: 26px; display: flex; justify-content: center; }
.sep::before { content: ""; border-left: 2px dotted #a6a49a; }
.sep-grip { justify-content: flex-start; padding-left: 1px; }
.sep-after { margin-right: 3px; }
.sep-after2 { margin-right: 1px; }
.sep-narrow { width: 5px; }
.sep-wide { width: 10px; margin-right: 1px; }

/* message */
.message {
  height: 47px; flex: none; display: flex; padding: 11px 5px 0 6px;
  background: #e3e1d8; border-bottom: 3px solid #d8d6cb; color: #44443e;
  font-size: 11.700px; line-height: 14px;
}
.msg-arrow { width: 13px; height: 13px; margin-right: 3px; flex: none; }
.msg-scroll { margin-left: auto; margin-top: -11px; padding-top: 1px; width: 16px; display: flex; flex-direction: column; align-items: center; }
.sb { width: 15px; height: 14px; background: #d2cfc4; border: 1px solid #b4b2a6; border-radius: 2px; display: flex; align-items: center; justify-content: center; }
.sb svg { width: 10px; height: 6px; }
.sb-thumb { width: 15px; height: 7px; margin: 7px 0 2px; background: #cfccc1; border: 1px solid #b4b2a6; border-radius: 2px; }

/* workspace */
.workspace { height: 408px; flex: none; display: flex; background: #d6d3c7; }
.panel { width: 218px; flex: none; display: flex; flex-direction: column; padding-left: 1px; }
.tabs { height: 28px; flex: none; display: flex; gap: 1px; align-items: flex-end; }
.tab {
  width: 30px; height: 27px; display: flex; align-items: center; justify-content: center;
  background: #cfcdc1; border: 1px solid #b8b6aa; border-bottom: 0; border-radius: 3px 3px 0 0;
}
.tab svg { width: 24px; height: 24px; }
.tab.active { width: 34px; height: 29px; background: #e3e1d8; z-index: 1; margin-bottom: -1px; }
.panel-box { flex: 1; display: flex; flex-direction: column; border-top: 1px solid #a8a69c; border-right: 2px solid #99978c; padding: 2px 1px 0 1px; min-height: 0; }
.panel-actions { height: 20px; flex: none; display: flex; gap: 2px; }
.pbtn {
  height: 20px; padding: 0; display: flex; align-items: center; gap: 6px;
  background: #d6d3c7; border: 1px solid #a09e92; border-bottom-width: 2px; border-radius: 3px;
  font: 10.500px "Liberation Sans", sans-serif; color: #44443e;
}
.pbtn svg { width: 8px; height: 6px; }
.pbtn-show { width: 70px; padding-left: 18px; }
.pbtn-set { width: 94px; padding-left: 17px; }
.tree-head { height: 16px; flex: none; margin-top: 1px; background: #c8c6ba; border: 1px solid #aeac9f; border-bottom-color: #8f8d82; }
.tree { flex: 1; margin: 0; padding: 1px 0 0 4px; list-style: none; background: #fff; border-bottom: 2px solid #98968b; border-left: 1px solid #98968b; font-size: 12px; color: #4a4a48; }
.tree li { height: 18px; display: flex; align-items: center; }
.tree li svg { width: 16px; height: 18px; flex: none; margin-left: 1px; }
.tree li span { margin-left: 12px; white-space: nowrap; }
.tree .root svg { margin-left: 0; }
.tree .root span { margin-left: 10px; }
.tree .narrow span { font-size: 11.500px; }
.guide {
  width: 16px; height: 18px; flex: none; display: flex; align-items: center;
  background:
    linear-gradient(#9a9a9a 50%, transparent 50%) 4px 0/1px 2px repeat-y,
    linear-gradient(90deg, #9a9a9a 50%, transparent 50%) 4px 9px/2px 1px no-repeat,
    linear-gradient(90deg, #9a9a9a 50%, transparent 50%) 6px 9px/2px 1px no-repeat,
    linear-gradient(90deg, #9a9a9a 50%, transparent 50%) 8px 9px/2px 1px no-repeat,
    linear-gradient(90deg, #9a9a9a 50%, transparent 50%) 10px 9px/2px 1px no-repeat,
    linear-gradient(90deg, #9a9a9a 50%, transparent 50%) 12px 9px/2px 1px no-repeat,
    linear-gradient(90deg, #9a9a9a 50%, transparent 50%) 14px 9px/2px 1px no-repeat;
}
.last .guide {
  background:
    linear-gradient(#fff, #fff) 4px 10px/1px 8px no-repeat,
    linear-gradient(#9a9a9a 50%, transparent 50%) 4px 0/1px 2px repeat-y,
    linear-gradient(90deg, #9a9a9a 50%, transparent 50%) 4px 9px/2px 1px no-repeat,
    linear-gradient(90deg, #9a9a9a 50%, transparent 50%) 6px 9px/2px 1px no-repeat,
    linear-gradient(90deg, #9a9a9a 50%, transparent 50%) 8px 9px/2px 1px no-repeat,
    linear-gradient(90deg, #9a9a9a 50%, transparent 50%) 10px 9px/2px 1px no-repeat,
    linear-gradient(90deg, #9a9a9a 50%, transparent 50%) 12px 9px/2px 1px no-repeat,
    linear-gradient(90deg, #9a9a9a 50%, transparent 50%) 14px 9px/2px 1px no-repeat;
}
.guide.plus::before {
  content: ""; width: 9px; height: 9px; display: block; border: 1px solid #888;
  background:
    linear-gradient(#222, #222) center/5px 1px no-repeat,
    linear-gradient(#222, #222) center/1px 5px no-repeat,
    #fff;
}

/* splitter */
.splitter {
  width: 18px; flex: none; display: grid; grid-template-columns: 8px 8px; grid-template-rows: 104px 104px 104px; align-content: start;
  padding: 48px 0 0 2px;
  background:
    linear-gradient(#a8a69c, #a8a69c) 8px 0/1px 100% no-repeat,
    linear-gradient(#b4b2a8, #b4b2a8) 11px 0/1px 100% no-repeat,
    linear-gradient(#b4b2a8, #b4b2a8) 14px 0/1px 100% no-repeat,
    #d6d3c7;
}
.grip-col { grid-column: 1; }
.chev { width: 6px; height: 8px; flex: none; display: block; }
.grip {
  width: 6px; height: 104px; display: flex; flex-direction: column; align-items: center; gap: 3px; padding-top: 43px;
  background: repeating-conic-gradient(#a9a79d 0 25%, #dedcd2 0 50%) 0 0/2px 2px;
}
.grip-mid {
  grid-column: 2; grid-row: 2; width: 6px; height: 104px; padding: 1px 0; display: flex; flex-direction: column; justify-content: space-between; align-items: center;
  background: linear-gradient(#555 50%, transparent 50%) 2px 0/1px 3px repeat-y #d6d3c7;
}
.grip-low { grid-row: 3; margin-top: 4px; }

/* viewport */
.viewport { width: 570px; height: 408px; flex: none; display: block; }
.gl { font: 8.500px "Liberation Sans", sans-serif; fill: #b8a888; }
.gl-dim { fill: #8a6a4a; font-size: 9.500px; }

/* right bar */
.rightbar { width: 66px; flex: none; display: flex; padding-left: 1px; }
.rcol { display: flex; flex-direction: column; }
.rcol-a { width: 36px; }
.rcol-b { width: 29px; }
.rb { height: 28px; flex: none; display: flex; align-items: center; padding-left: 2px; }
.rb svg { width: 24px; height: 24px; flex: none; }
.rb em { font: 700 13px/1 "Liberation Sans", sans-serif; color: #222; margin-left: 2px; font-style: normal; }
.rsep { height: 8px; flex: none; margin: 1px 2px 0; border-top: 2px dotted #a6a49a; }
.rsep-mid { margin-top: 2px; height: 7px; margin-bottom: 3px; }
.rsep-b { height: 6px; }

/* status bar */
.statusbar { height: 24px; flex: none; display: flex; align-items: center; background: #d6d3c6; padding-left: 588px; }
.status-div { width: 1px; height: 22px; background: #96948a; }
.combo { margin-left: 96px; width: 153px; height: 19px; display: flex; border: 1px solid #96948a; background: #fff; }
.combo-val { flex: 1; padding: 3px 0 0 4px; font-size: 11.500px; color: #44443e; }
.combo-btn { width: 17px; border-left: 1px solid #96948a; background: #d6d3c7; display: flex; align-items: center; justify-content: center; }
.combo-btn svg { width: 10px; height: 6px; }
```
